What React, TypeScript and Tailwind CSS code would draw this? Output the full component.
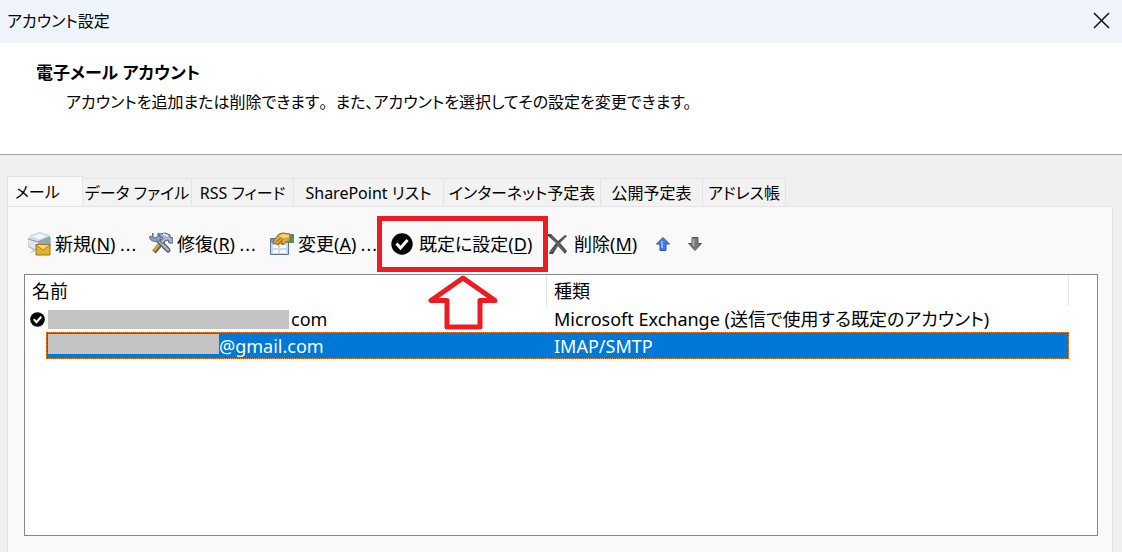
import React from 'react';

const tabs = [
  { label: 'データ ファイル', width: 'w-[109px]' },
  { label: 'RSS フィード', width: 'w-[102px]' },
  { label: 'SharePoint リスト', width: 'w-[150px]' },
  { label: 'インターネット予定表', width: 'w-[157px]' },
  { label: '公開予定表', width: 'w-[102px]' },
  { label: 'アドレス帳', width: 'w-[83px]' },
];

const NewMailIcon = () => (
  <svg width="24" height="24" viewBox="0 0 24 24" aria-hidden="true">
    <path d="M1 8v7l5 3-4 4 6-3 3-1V10z" fill="#c3cbd6" />
    <path d="M1 7 4 3l9-3 9 3 2 3v8l-13 6-9-5z" fill="#b4bfcd" />
    <path d="M1 7 4 3l9-3 10 4-12 5z" fill="#d5dce6" />
    <path d="m5 4 8-2 7 2-8 3z" fill="#f3f6fa" />
    <path d="m1 7 10 3v9l-9-5z" fill="#dfe5ed" />
    <path d="m1 7 10 3 12-5" fill="none" stroke="#8e9bad" />
    <path d="m11 10 12-5v8l-12 6z" fill="#97a5b8" />
    <path d="M20 6h3v2h-3z" fill="#44dc52" />
    <path d="M9 12.500h14V23H9z" fill="#dfb32f" stroke="#9c7419" />
    <path d="M10 13h12l-6 5z" fill="#f7db72" />
    <path d="m9 13 7 5 7-5" fill="none" stroke="#ad8522" />
  </svg>
);

const RepairIcon = () => (
  <svg width="24" height="24" viewBox="0 0 24 24" aria-hidden="true">
    <path d="m5 20 9-11" stroke="#795627" strokeWidth="4.500" />
    <path d="m5 19 9-11" stroke="#d4a34c" strokeWidth="2.500" />
    <path d="m9 8 10 10" stroke="#485568" strokeWidth="5" strokeLinecap="round" />
    <path d="m9 8 10 10" stroke="#a5b5ca" strokeWidth="2.500" strokeLinecap="round" />
    <path d="M4 1v4l2 1 3-2V1c3 1 4 4 2 7-2 2-5 2-7 1C1 8 0 6 1 4l2 1z" fill="#8fa0b6" stroke="#596980" />
    <path d="m11 2 5-1 5 2v2l3 1v5h-4l-1-3-3 1-2 3-3-3 3-3-4-2z" fill="#a4b5ca" stroke="#4e5e73" />
    <path d="m14 2 5 2" stroke="#edf4fc" strokeWidth="1.500" />
  </svg>
);

const ChangeIcon = () => (
  <svg width="24" height="24" viewBox="0 0 24 24" aria-hidden="true">
    <path d="M.500 6.500h18v16H.500z" fill="#c9d9ec" stroke="#58749a" />
    <path d="M1 7h17v4H1z" fill="#7796bd" />
    <path d="M3 13h5v3H3zm7 0h6v3h-6zm-7 5h5v3H3zm7 0h6v3h-6z" fill="#fff" />
    <path d="M19 2h5v9h-5z" fill="#4b9266" />
    <path d="m4 8 5-6 4-1 7 1v7l-4 1-3 3-2-2-4 2-1-2-3 1z" fill="#dda63c" stroke="#94691f" />
    <path d="m9 4 4-2 6 1v2l-5 1-3-1z" fill="#f5d876" />
    <path d="m6 10 5-4m-3 6 5-5m0 5-2-3" stroke="#956f2a" fill="none" />
  </svg>
);

const CheckIcon = ({ size }: { size: number }) => (
  <svg width={size} height={size} viewBox="0 0 22 22" aria-hidden="true" className="shrink-0">
    <circle cx="11" cy="11" r="10.700" fill="#050505" />
    <path d="m5.500 10.500 4 4.500L16.500 7" fill="none" stroke="#fff" strokeWidth="3" />
  </svg>
);

const DeleteIcon = () => (
  <svg width="20" height="22" viewBox="0 0 20 22" aria-hidden="true">
    <path d="M0 1h3l7 7 7-6 2 1-7 7 7 8-2 3-7-8-5 8H1l1-3 6-8-8-7z" fill="#4a4a4d" />
    <path d="m3 3 14 16M17 4 3 19" stroke="#77777b" />
  </svg>
);

const MoveIcon = ({ down }: { down?: boolean }) => (
  <svg width="14" height="14" viewBox="0 0 14 14" aria-hidden="true">
    {down ? (
      <>
        <path d="M4 .500h6v6h3.500L7 13.500.500 6.500H4z" fill="#777" stroke="#5a5a5a" />
        <path d="M5.500 2v7" stroke="#aaa" strokeWidth="2" />
      </>
    ) : (
      <>
        <path d="M7 .500 13.500 7H10v6.500H4V7H.500z" fill="#4479e2" stroke="#2454b8" />
        <path d="M6 4v7" stroke="#8bb6ff" strokeWidth="2" />
      </>
    )}
  </svg>
);

interface ToolButtonProps {
  icon: React.ReactNode;
  label: string;
  accessKey: string;
  dots?: boolean;
  className: string;
}

const ToolButton: React.FC<ToolButtonProps> = ({ icon, label, accessKey, dots, className }) => (
  <button type="button" className={`flex shrink-0 items-center whitespace-nowrap ${className}`}>
    {icon}
    <span>
      {label}(<u className="underline-offset-2">{accessKey}</u>)
      {dots && <span className="ml-1 font-['DejaVu_Sans',sans-serif] leading-none">...</span>}
    </span>
  </button>
);

const App: React.FC = () => {
  return (
    <div className="flex min-h-screen flex-col bg-[#f0f0f0] font-['Noto_Sans','Noto_Sans_CJK_JP',sans-serif] text-[18px] leading-6 text-black [font-feature-settings:'palt']">
      {/* Title bar */}
      <header className="flex h-[43px] items-center justify-between bg-[#eff3fa] pr-3 pb-0.5 pl-[7px]">
        <h1 className="text-[16px]">アカウント設定</h1>
        <button type="button" aria-label="閉じる">
          <svg width="17" height="17" viewBox="0 0 17 17" aria-hidden="true">
            <path d="m1 1 15 15M16 1 1 16" stroke="#111" strokeWidth="1.500" />
          </svg>
        </button>
      </header>

      <section className="h-28 border-b border-[#a0a0a0] bg-white pt-[18px] pl-9">
        <h2 className="text-[17px] font-bold">電子メール アカウント</h2>
        <p className="mt-[5px] pl-[30px] text-[16px]">
          アカウントを追加または削除できます
          {/* full-width stop between the sentences */}
          <span className="[font-feature-settings:normal]">。</span>
          また、アカウントを選択してその設定を変更できます。
        </p>
      </section>

      <main className="flex flex-1 flex-col pt-[21px] pr-[9px] pl-[7px]">
        {/* Tabs */}
        <div role="tablist" className="flex items-end text-[16px]">
          <button
            type="button"
            role="tab"
            aria-selected="true"
            className="-mb-px h-[31px] w-[76px] border border-b-0 border-[#e3e3e3] bg-[#f9f9f9] pl-[7px] text-left"
          >
            メール
          </button>
          {tabs.map((tab) => (
            <button
              key={tab.label}
              type="button"
              role="tab"
              aria-selected="false"
              className={`h-7 border-t border-r border-[#e3e3e3] bg-[#f2f2f2] whitespace-nowrap ${tab.width}`}
            >
              {tab.label}
            </button>
          ))}
        </div>

        <div role="tabpanel" className="flex flex-1 flex-col border border-b-0 border-[#e3e3e3] bg-[#f9f9f9] pr-3.5 pb-4 pl-4">
          {/* Toolbar */}
          <div className="relative flex h-[67px] items-center pt-1.5 pl-[3px]">
            <ToolButton icon={<NewMailIcon />} label="新規" accessKey="N" dots className="w-[122px] gap-1" />
            <ToolButton icon={<RepairIcon />} label="修復" accessKey="R" dots className="w-[121px] gap-1" />
            <ToolButton icon={<ChangeIcon />} label="変更" accessKey="A" dots className="w-[121px] gap-1" />
            <ToolButton icon={<CheckIcon size={22} />} label="既定に設定" accessKey="D" className="w-[157px] gap-1.5" />
            <ToolButton icon={<DeleteIcon />} label="削除" accessKey="M" className="w-[108px] gap-1.5" />
            <button type="button" aria-label="上へ" className="w-8">
              <MoveIcon />
            </button>
            <button type="button" aria-label="下へ" className="w-8">
              <MoveIcon down />
            </button>

            {/* Callout around the default button */}
            <div className="pointer-events-none absolute top-[9px] left-[353px] h-14 w-[171px] border-5 border-[#ed1c24]" />
            <svg
              className="pointer-events-none absolute top-[67px] left-[403px] z-10"
              width="72"
              height="56"
              viewBox="0 0 72 56"
              aria-hidden="true"
            >
              <path
                d="M36 4 4 26.500h16V53h33V26.500h15z"
                fill="#fff"
                stroke="#ed1c24"
                strokeWidth="5"
                strokeLinejoin="round"
              />
            </svg>
          </div>

          {/* Account list */}
          <div className="flex-1 border border-[#828790] bg-white pr-7">
            <table className="w-full table-fixed border-separate border-spacing-0 text-left">
              <thead>
                <tr className="h-[31px]">
                  <th className="border-r border-[#e5e5e5] p-0 pl-[7px] font-normal">名前</th>
                  <th className="border-r border-[#e5e5e5] p-0 pl-[7px] font-normal">種類</th>
                </tr>
              </thead>
              <tbody>
                <tr className="h-[26px]">
                  <td className="p-0">
                    <div className="flex items-center pl-[5px]">
                      <CheckIcon size={15} />
                      <span className="ml-[3px] h-[19px] w-[241px] bg-[#c3c3c3]" />
                      <span className="pl-0.5">com</span>
                    </div>
                  </td>
                  <td className="p-0 pl-[7px] whitespace-nowrap">
                    Microsoft Exchange (送信で使用する既定のアカウント)
                  </td>
                </tr>
                <tr className="h-[27px] text-white">
                  <td className="p-0 pl-[21px]">
                    <div className="flex h-[27px] items-center border border-r-0 border-dotted border-[#ff872d] bg-[#0078d7] pl-px">
                      <span className="mb-1 h-5 w-[171px] bg-[#c3c3c3]" />
                      <span>@gmail.com</span>
                    </div>
                  </td>
                  <td className="p-0">
                    <div className="flex h-[27px] items-center border border-l-0 border-dotted border-[#ff872d] bg-[#0078d7] pl-[7px]">
                      IMAP/SMTP
                    </div>
                  </td>
                </tr>
              </tbody>
            </table>
          </div>
        </div>
      </main>
    </div>
  );
};

export default App;
